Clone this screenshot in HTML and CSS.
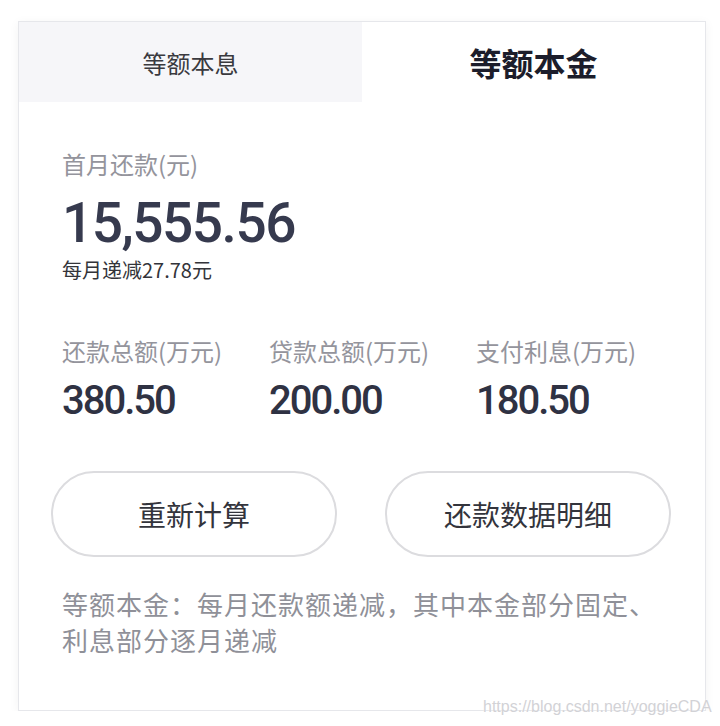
FILE: index.html
```html
<!DOCTYPE html>
<html lang="zh-CN">
<head>
    <meta charset="UTF-8">
    <meta name="viewport" content="width=device-width, initial-scale=1.0">
    <title>房贷计算结果</title>
    <link rel="stylesheet" href="styles.css">
</head>
<body>
    <div class="card">
        <div class="tabs">
            <div class="tab">等额本息</div>
            <div class="tab active">等额本金</div>
        </div>
        <div class="result">
            <div class="label">首月还款(元)</div>
            <div class="amount">15,555.56</div>
            <div class="decrease">每月递减27.78元</div>

            <div class="stats">
                <div class="stat">
                    <div class="label">还款总额(万元)</div>
                    <div class="value">380.50</div>
                </div>
                <div class="stat">
                    <div class="label">贷款总额(万元)</div>
                    <div class="value">200.00</div>
                </div>
                <div class="stat">
                    <div class="label">支付利息(万元)</div>
                    <div class="value">180.50</div>
                </div>
            </div>
        </div>
        <div class="actions">
            <button class="btn">重新计算</button>
            <button class="btn">还款数据明细</button>
        </div>
        <p class="note">等额本金：每月还款额递减，其中本金部分固定、<br>利息部分逐月递减</p>
    </div>
    <div class="watermark">https://blog.csdn.net/yoggieCDA</div>
</body>
</html>
```

FILE: styles.css
```css
body {
    margin: 0;
    padding: 21px 0 0 18px;
    background-color: #fff;
    font-family: "Noto Sans CJK SC", "Noto Sans", sans-serif;
    color: #333;
}
.card {
    width: 686px;
    height: 688px;
    border: 1px solid #e6e7eb;
    box-shadow: 0 2px 10px rgba(0, 0, 0, 0.05);
    background: #fff;
}
.tabs {
    display: flex;
    height: 80px;
}
.tab {
    flex: 1;
    display: flex;
    align-items: center;
    justify-content: center;
    font-size: 24px;
    color: #3a3a3f;
    background-color: #f6f6f9;
}
.tab.active {
    background-color: #fff;
    font-size: 32px;
    font-weight: bold;
    color: #1c1d2b;
}
.result {
    padding: 45px 0 0 43px;
}
.label {
    font-size: 24px;
    line-height: 34px;
    color: #94949c;
}
.amount {
    margin-top: 14px;
    font-family: Roboto, "Noto Sans", sans-serif;
    font-size: 55px;
    line-height: 56px;
    font-weight: 500;
    letter-spacing: -1.5px;
    color: #363a4e;
}
.decrease {
    margin-top: 5px;
    font-size: 20px;
    line-height: 28px;
    color: #33343a;
}
.stats {
    display: grid;
    grid-template-columns: repeat(3, 207px);
    margin-top: 50px;
}
.value {
    margin-top: 13px;
    font-family: Roboto, "Noto Sans", sans-serif;
    font-size: 40px;
    line-height: 40px;
    font-weight: 500;
    letter-spacing: -2px;
    color: #2f3243;
}
.actions {
    display: flex;
    gap: 48px;
    padding: 0 34px 0 32px;
    margin-top: 50px;
}
.btn {
    flex: 1;
    height: 86px;
    border: 2px solid #dcdcdf;
    border-radius: 43px;
    background: #fff;
    font-family: inherit;
    font-size: 28px;
    color: #33343c;
}
.note {
    margin: 29px 0 0 43px;
    font-size: 26px;
    line-height: 36px;
    letter-spacing: 1px;
    color: #8f9098;
}
.watermark {
    position: absolute;
    left: 483px;
    top: 698px;
    font-family: "Liberation Sans", Arial, sans-serif;
    font-size: 16px;
    color: #d2d2d6;
    text-shadow: 0 0 2px #fff;
}
```
